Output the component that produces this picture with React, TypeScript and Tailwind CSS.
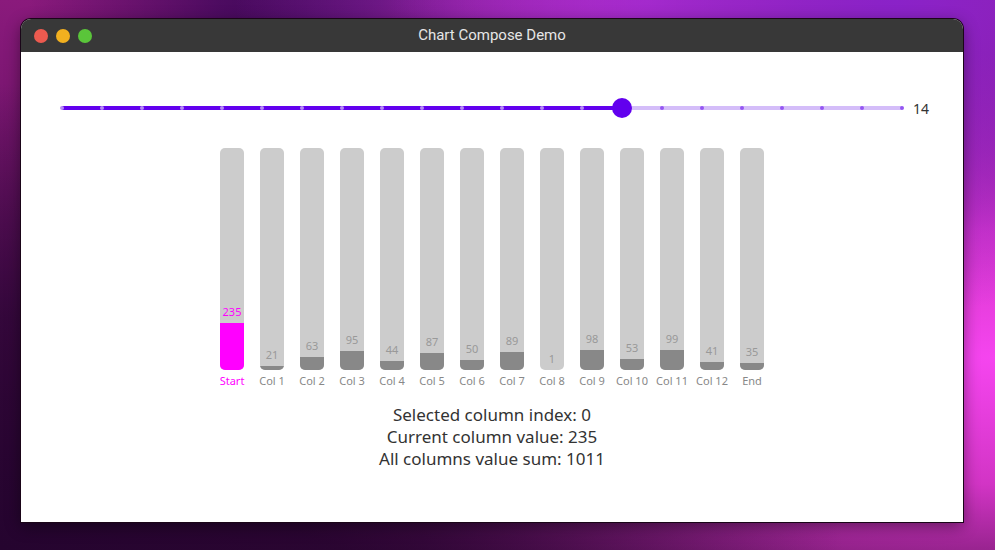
import React from "react";

type Column = {
  label: string;
  value: number;
};

const columns: Column[] = [
  { label: "Start", value: 235 },
  { label: "Col 1", value: 21 },
  { label: "Col 2", value: 63 },
  { label: "Col 3", value: 95 },
  { label: "Col 4", value: 44 },
  { label: "Col 5", value: 87 },
  { label: "Col 6", value: 50 },
  { label: "Col 7", value: 89 },
  { label: "Col 8", value: 1 },
  { label: "Col 9", value: 98 },
  { label: "Col 10", value: 53 },
  { label: "Col 11", value: 99 },
  { label: "Col 12", value: 41 },
  { label: "End", value: 35 },
];

const selectedIndex = 0;
const sliderValue = 14;
const sliderSteps = 21;
const stepWidth = 40;
const pxPerUnit = 0.2;

function TrafficLights() {
  return (
    <div className="flex items-center gap-[8px] pl-[13px]">
      <span className="h-[14px] w-[14px] rounded-full bg-[#ec5a4f]" />
      <span className="h-[14px] w-[14px] rounded-full bg-[#f2b01f]" />
      <span className="h-[14px] w-[14px] rounded-full bg-[#5ac53a]" />
    </div>
  );
}

function StepSlider() {
  const ticks = Array.from({ length: sliderSteps + 1 }, (_, i) => i);

  return (
    <div className="flex h-[20px] items-center pl-[41px]">
      <div className="relative h-[4px] w-[840px] bg-[#d4bdf9]">
        <div className="h-full bg-[#6200ee]" style={{ width: sliderValue * stepWidth }} />
        {ticks.map((i) => (
          <span
            key={i}
            className={`absolute top-1/2 h-[4px] w-[4px] -translate-x-1/2 -translate-y-1/2 rounded-full ${
              i <= sliderValue ? "bg-[#b58af6]" : "bg-[#9456f2]"
            }`}
            style={{ left: i * stepWidth }}
          />
        ))}
        <span
          className="absolute top-1/2 h-[20px] w-[20px] -translate-x-1/2 -translate-y-1/2 rounded-full bg-[#6200ee]"
          style={{ left: sliderValue * stepWidth }}
        />
      </div>
      <span className="ml-[11px] text-[14px] text-[#333] [font-family:'Noto_Sans',sans-serif]">{sliderValue}</span>
    </div>
  );
}

function BarChart() {
  return (
    <div className="flex justify-center gap-[16px] [font-family:'Noto_Sans',sans-serif]">
      {columns.map((col, index) => {
        const selected = index === selectedIndex;
        return (
          <div key={col.label} className="flex w-[24px] flex-col items-center">
            <div className="flex h-[222px] w-[24px] flex-col items-center justify-end overflow-hidden rounded-[5px] bg-[#cccccc]">
              <span
                className={`mb-[4px] text-[11px] leading-[14px] ${selected ? "text-[#ff00ff]" : "text-[#999999]"}`}
              >
                {col.value}
              </span>
              <div
                className={`w-full ${selected ? "bg-[#ff00ff]" : "bg-[#888888]"}`}
                style={{ height: col.value * pxPerUnit }}
              />
            </div>
            <span
              className={`mt-[4px] whitespace-nowrap text-[11px] leading-[14px] ${
                selected ? "text-[#ff00ff]" : "text-[#888888]"
              }`}
            >
              {col.label}
            </span>
          </div>
        );
      })}
    </div>
  );
}

export default function App() {
  const sum = columns.reduce((acc, c) => acc + c.value, 0);

  return (
    <div className="relative h-[550px] w-[995px] overflow-hidden bg-[linear-gradient(180deg,#8a1a7c_0%,#5a0f5a_55%,#3a0838_100%)]">
      <div className="pointer-events-none absolute inset-0 bg-[radial-gradient(ellipse_at_38%_0%,#330555_0%,rgba(51,5,85,0.7)_18%,transparent_40%)]" />
      <div className="pointer-events-none absolute inset-0 bg-[radial-gradient(ellipse_at_65%_0%,#cc36d4_0%,rgba(204,54,212,0.6)_20%,transparent_45%)]" />
      <div className="pointer-events-none absolute inset-0 bg-[radial-gradient(ellipse_at_100%_65%,#f545ef_0%,rgba(235,60,220,0.85)_25%,transparent_60%)]" />
      <div className="pointer-events-none absolute inset-0 bg-[radial-gradient(ellipse_at_90%_0%,#8a22c8_0%,rgba(138,34,200,0.6)_20%,transparent_40%)]" />
      <div className="pointer-events-none absolute inset-0 bg-[radial-gradient(ellipse_at_0%_100%,#25042f_0%,rgba(37,4,47,0.7)_30%,transparent_60%)]" />

      <div className="relative pl-[21px] pt-[19px]">
        <div className="flex h-[503px] w-[942px] flex-col overflow-hidden rounded-t-[10px] bg-white shadow-[0_0_0_1px_#1a0518,0_4px_16px_rgba(0,0,0,0.45)]">
          <div className="relative flex h-[33px] shrink-0 items-center bg-[#383838]">
            <TrafficLights />
            <span className="absolute inset-x-0 text-center text-[15px] text-[#e6e6e6] [font-family:Roboto,'Liberation_Sans',sans-serif]">
              Chart Compose Demo
            </span>
          </div>

          <div className="flex flex-1 flex-col">
            <div className="mt-[46px]">
              <StepSlider />
            </div>
            <div className="mt-[30px]">
              <BarChart />
            </div>
            <div className="mt-[16px] flex flex-col items-center text-[17px] leading-[22px] text-[#333333] [font-family:'Noto_Sans',sans-serif]">
              <span>Selected column index: {selectedIndex}</span>
              <span>Current column value: {columns[selectedIndex].value}</span>
              <span>All columns value sum: {sum}</span>
            </div>
          </div>
        </div>
      </div>
    </div>
  );
}
